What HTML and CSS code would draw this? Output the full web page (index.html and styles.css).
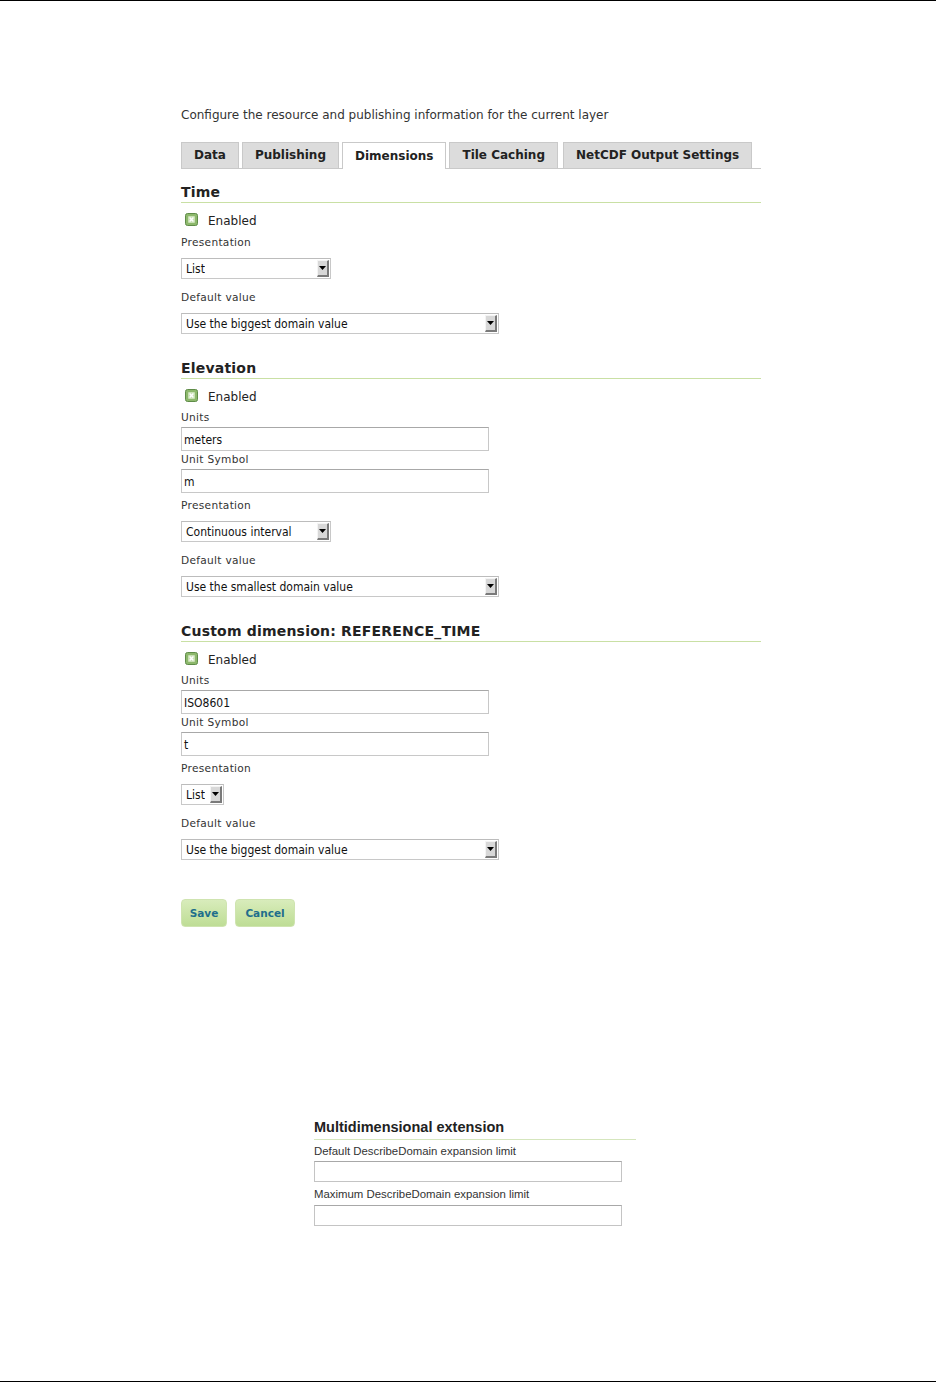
FILE: index.html
```html
<!DOCTYPE html>
<html>
<head>
<meta charset="utf-8">
<link rel="stylesheet" href="styles.css">
</head>
<body>
<div class="page">
  <div class="content">
    <p class="intro">Configure the resource and publishing information for the current layer</p>
    <div class="tabs">
      <div class="tab">Data</div>
      <div class="tab">Publishing</div>
      <div class="tab active">Dimensions</div>
      <div class="tab">Tile Caching</div>
      <div class="tab wide-gap">NetCDF Output Settings</div>
    </div>

    <div class="section first">
      <h3 class="sec-title">Time</h3>
      <div class="check-row"><span class="check"><svg width="13" height="13" viewBox="0 0 13 13"><rect x="0.5" y="0.5" width="12" height="12" rx="2" fill="#8db86c" stroke="#5f8c48"/><rect x="3" y="3" width="7" height="7" rx="1" fill="#c9e0b5"/><path d="M4.6 4.6 L8.4 8.4 M8.4 4.6 L4.6 8.4" stroke="#fff" stroke-width="1.4"/></svg></span><span class="check-label">Enabled</span></div>
      <div class="label pres">Presentation</div>
      <div class="select w150"><span class="sel-text">List</span><span class="sel-btn"><svg width="7" height="4" viewBox="0 0 7 4"><path d="M0 0 H7 L3.5 4 Z" fill="#000"/></svg></span></div>
      <div class="label def">Default value</div>
      <div class="select w318"><span class="sel-text">Use the biggest domain value</span><span class="sel-btn"><svg width="7" height="4" viewBox="0 0 7 4"><path d="M0 0 H7 L3.5 4 Z" fill="#000"/></svg></span></div>
    </div>

    <div class="section">
      <h3 class="sec-title">Elevation</h3>
      <div class="check-row"><span class="check"><svg width="13" height="13" viewBox="0 0 13 13"><rect x="0.5" y="0.5" width="12" height="12" rx="2" fill="#8db86c" stroke="#5f8c48"/><rect x="3" y="3" width="7" height="7" rx="1" fill="#c9e0b5"/><path d="M4.6 4.6 L8.4 8.4 M8.4 4.6 L4.6 8.4" stroke="#fff" stroke-width="1.4"/></svg></span><span class="check-label">Enabled</span></div>
      <div class="label units">Units</div>
      <div class="input">meters</div>
      <div class="label sym">Unit Symbol</div>
      <div class="input">m</div>
      <div class="label pres2">Presentation</div>
      <div class="select w150"><span class="sel-text">Continuous interval</span><span class="sel-btn"><svg width="7" height="4" viewBox="0 0 7 4"><path d="M0 0 H7 L3.5 4 Z" fill="#000"/></svg></span></div>
      <div class="label def">Default value</div>
      <div class="select w318"><span class="sel-text">Use the smallest domain value</span><span class="sel-btn"><svg width="7" height="4" viewBox="0 0 7 4"><path d="M0 0 H7 L3.5 4 Z" fill="#000"/></svg></span></div>
    </div>

    <div class="section">
      <h3 class="sec-title">Custom dimension: REFERENCE_TIME</h3>
      <div class="check-row"><span class="check"><svg width="13" height="13" viewBox="0 0 13 13"><rect x="0.5" y="0.5" width="12" height="12" rx="2" fill="#8db86c" stroke="#5f8c48"/><rect x="3" y="3" width="7" height="7" rx="1" fill="#c9e0b5"/><path d="M4.6 4.6 L8.4 8.4 M8.4 4.6 L4.6 8.4" stroke="#fff" stroke-width="1.4"/></svg></span><span class="check-label">Enabled</span></div>
      <div class="label units">Units</div>
      <div class="input">ISO8601</div>
      <div class="label sym">Unit Symbol</div>
      <div class="input">t</div>
      <div class="label pres2">Presentation</div>
      <div class="select w44"><span class="sel-text">List</span><span class="sel-btn"><svg width="7" height="4" viewBox="0 0 7 4"><path d="M0 0 H7 L3.5 4 Z" fill="#000"/></svg></span></div>
      <div class="label def">Default value</div>
      <div class="select w318"><span class="sel-text">Use the biggest domain value</span><span class="sel-btn"><svg width="7" height="4" viewBox="0 0 7 4"><path d="M0 0 H7 L3.5 4 Z" fill="#000"/></svg></span></div>
    </div>

    <div class="buttons">
      <span class="btn save">Save</span>
      <span class="btn cancel">Cancel</span>
    </div>
  </div>

  <div class="multi">
    <h3 class="multi-title">Multidimensional extension</h3>
    <div class="m-label first">Default DescribeDomain expansion limit</div>
    <div class="m-input first"></div>
    <div class="m-label">Maximum DescribeDomain expansion limit</div>
    <div class="m-input"></div>
  </div>
</div>
</body>
</html>
```

FILE: styles.css
```css
html, body {
  margin: 0;
  padding: 0;
  background: #fff;
}

.page {
  box-sizing: border-box;
  height: 1382px;
  border-top: 1px solid #000;
  border-bottom: 1px solid #000;
  font-family: "DejaVu Sans", Verdana, sans-serif;
  color: #222;
  overflow: hidden;
}

.content {
  margin-left: 181px;
  width: 580px;
  padding-top: 106px;
}

.intro {
  margin: 0;
  font-size: 12px;
  line-height: 16px;
  color: #333;
}

.tabs {
  display: flex;
  align-items: flex-end;
  margin-top: 19px;
  border-bottom: 1px solid #c9c9c9;
  height: 26px;
}

.tab {
  box-sizing: border-box;
  height: 26px;
  margin-right: 3px;
  padding: 0 12px;
  background: #dcdcdc;
  border: 1px solid #c9c9c9;
  border-bottom: none;
  font-size: 12px;
  font-weight: bold;
  line-height: 25px;
  color: #222;
  white-space: nowrap;
  flex-shrink: 0;
}

.tab.active {
  background: #fff;
  height: 27px;
  margin-bottom: -1px;
  line-height: 26px;
}

.tab.wide-gap {
  margin-left: 2px;
}

.section.first {
  margin-top: 14px;
}

.section {
  margin-top: 25px;
}

.sec-title {
  margin: 0;
  font-size: 14px;
  font-weight: bold;
  line-height: 18px;
  color: #222;
  letter-spacing: 0.2px;
  padding-bottom: 1px;
  border-bottom: 1px solid #c9e0a4;
}

.check-row {
  display: flex;
  align-items: center;
  margin-top: 10px;
  height: 16px;
}

.check {
  display: inline-flex;
  margin-left: 4px;
  margin-top: -4px;
}

.check-label {
  margin-left: 10px;
  font-size: 12px;
  color: #222;
}

.label {
  font-size: 10.6px;
  color: #333;
  letter-spacing: 0.3px;
  line-height: 14px;
}

.label.pres { margin-top: 6px; }
.label.def { margin-top: 11px; }
.label.units { margin-top: 5px; }
.label.sym { margin-top: 1px; }
.label.pres2 { margin-top: 5px; }

.select {
  box-sizing: border-box;
  display: flex;
  align-items: center;
  justify-content: space-between;
  height: 21px;
  margin-top: 9px;
  border: 1px solid #c8c8c8;
  border-top-color: #bcbcbc;
  background: #fff;
  padding: 1px 1px 1px 4px;
}

.w150 { width: 150px; }
.w318 { width: 318px; }
.w44 { width: 43px; }

.sel-text {
  font-family: "DejaVu Sans Condensed", "DejaVu Sans", sans-serif;
  font-stretch: condensed;
  font-size: 12px;
  color: #111;
  white-space: nowrap;
  overflow: hidden;
}

.sel-btn {
  box-sizing: border-box;
  display: flex;
  align-items: center;
  justify-content: center;
  width: 12px;
  height: 17px;
  background: #d8d8d8;
  border-right: 2px solid #7a7a7a;
  border-bottom: 2px solid #7a7a7a;
  border-top: 1px solid #f4f4f4;
  border-left: 1px solid #f4f4f4;
  flex-shrink: 0;
}

.input {
  box-sizing: border-box;
  width: 308px;
  height: 24px;
  margin-top: 3px;
  border: 1px solid #c8c8c8;
  border-top-color: #a8a8a8;
  padding: 4px 2px 0;
  font-family: "DejaVu Sans Condensed", "DejaVu Sans", sans-serif;
  font-stretch: condensed;
  font-size: 12px;
  line-height: 16px;
  color: #111;
}

.buttons {
  display: flex;
  gap: 8px;
  margin-top: 39px;
}

.btn {
  box-sizing: border-box;
  height: 28px;
  border: 1px solid #cfe4b0;
  border-radius: 4px;
  background: linear-gradient(#d8ecbb, #bedd95);
  font-size: 10.5px;
  font-weight: bold;
  line-height: 27px;
  color: #1f6e8c;
  text-align: center;
}

.save { width: 46px; }
.cancel { width: 60px; }

.multi {
  margin-left: 314px;
  width: 322px;
  margin-top: 191px;
  font-family: "Liberation Sans", Arial, sans-serif;
}

.multi-title {
  margin: 0;
  font-size: 14.5px;
  font-weight: bold;
  color: #222;
  line-height: 18px;
  padding-bottom: 3px;
  border-bottom: 1px solid #d5e6bd;
}

.m-label {
  font-size: 11.4px;
  color: #333;
  line-height: 13px;
  margin-top: 6px;
}

.m-label.first { margin-top: 5px; }

.m-input {
  box-sizing: border-box;
  width: 308px;
  height: 21px;
  margin-top: 4px;
  border: 1px solid #c4c4c4;
  border-top-color: #a8a8a8;
}

.m-input.first { margin-top: 3px; }
```
